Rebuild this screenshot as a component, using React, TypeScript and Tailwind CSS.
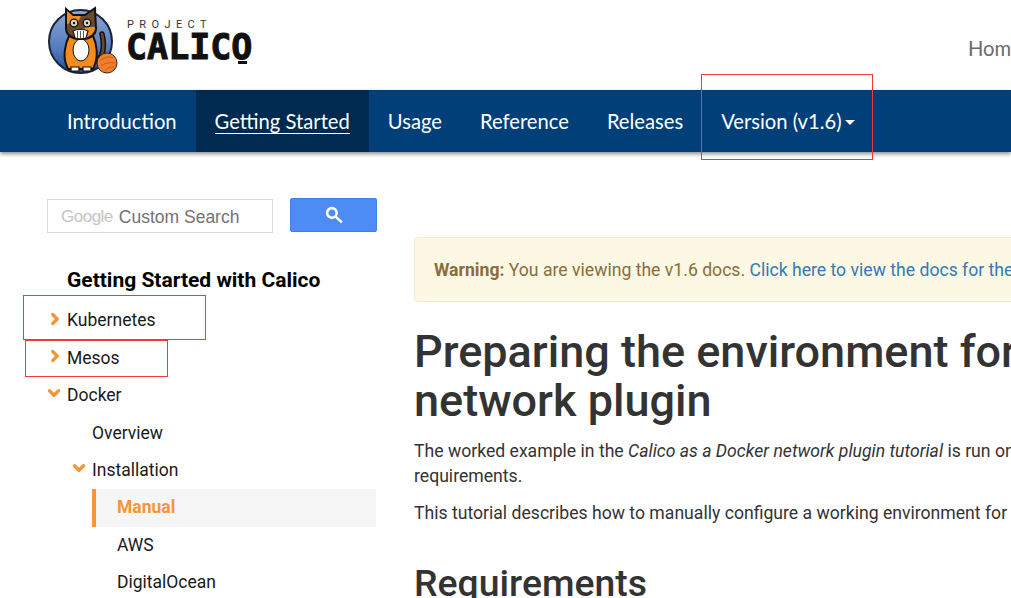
import { ChevronDown, ChevronRight } from "lucide-react";

function CalicoLogo() {
  return (
    <svg width="72" height="72" viewBox="0 0 72 72" className="shrink-0">
      <defs>
        <linearGradient id="disc" x1="0" y1="0" x2="0" y2="1">
          <stop offset="0" stopColor="#8fa9d6" />
          <stop offset="0.65" stopColor="#4f78bb" />
          <stop offset="1" stopColor="#1c4c9a" />
        </linearGradient>
      </defs>
      <circle cx="33.500" cy="35.500" r="31.500" fill="url(#disc)" stroke="#18243a" strokeWidth="2" />
      {/* tail */}
      <path d="M49 55c7-3 9-14 6-27" fill="none" stroke="#17120e" strokeWidth="5.500" strokeLinecap="round" />
      <path d="M49 55c7-3 9-14 6-27" fill="none" stroke="#6a4a2c" strokeWidth="2.500" strokeLinecap="round" />
      {/* body */}
      <path d="M22 30h24c4 8 5 20 2 28l-2 5H21l-2-5c-3-8-1-20 3-28z" fill="#f58a1f" stroke="#17120e" strokeWidth="2" />
      <ellipse cx="34" cy="44" rx="8" ry="11" fill="#fff" stroke="#17120e" strokeWidth="1" />
      <path d="M24 61h8v4h-8zM36 61h8v4h-8z" fill="#fff" stroke="#17120e" strokeWidth="1.200" />
      {/* head */}
      <path d="M19 3l7 6h12l10-7 1 21c-1 7-6 10-15 10s-14-3-15-10z" fill="#6a4a2c" stroke="#17120e" strokeWidth="2" />
      <path d="M20 5l6 5h8l-3 6-11 2z" fill="#f58a1f" />
      <path d="M38 21l10 0c0 6-5 10-12 11z" fill="#f58a1f" />
      <circle cx="27" cy="17" r="3.800" fill="#dcd8c8" stroke="#17120e" strokeWidth="1.300" />
      <circle cx="40" cy="17" r="3.800" fill="#dcd8c8" stroke="#17120e" strokeWidth="1.300" />
      <circle cx="27" cy="17" r="1.200" fill="#17120e" />
      <circle cx="40" cy="17" r="1.200" fill="#17120e" />
      <path d="M26 25c3-2 12-2 15 0l-2 7c-3 1-8 1-11 0z" fill="#fff" stroke="#17120e" strokeWidth="1.200" />
      <path d="M30.500 25v7M33.500 25v7M36.500 25v7" stroke="#17120e" strokeWidth="0.700" />
      {/* yarn */}
      <circle cx="60" cy="57" r="10" fill="#ef7f2d" stroke="#3a2416" strokeWidth="1" />
      <path d="M53 55c4-4 9-5 13-3M54 60c4-3 9-4 14-3M58 65c2-3 5-4 9-4" fill="none" stroke="#c95f17" strokeWidth="1" />
    </svg>
  );
}

function NavItem({ label, active }: { label: string; active?: boolean }) {
  return (
    <div className={`h-full px-[19px] flex items-center ${active ? "bg-[#002a50]" : ""}`}>
      <span className={`text-[20.200px] text-white ${active ? "border-b border-white leading-[24px]" : ""}`}>
        {label}
      </span>
    </div>
  );
}

function TreeRow({ label, open, plain, indent }: { label: string; open?: boolean; plain?: boolean; indent: string }) {
  return (
    <div className={`h-[37.500px] flex items-center relative ${indent}`}>
      {!plain && open && (
        <ChevronDown size={18} strokeWidth={4.500} className="absolute -ml-[22px] -mt-[4px] text-[#f7953a]" />
      )}
      {!plain && !open && (
        <ChevronRight size={18} strokeWidth={4.500} className="absolute -ml-[21px] -mt-[3px] text-[#f7953a]" />
      )}
      <span>{label}</span>
    </div>
  );
}

export default function App() {
  return (
    <div className="w-[1011px] h-[598px] overflow-hidden bg-white relative font-['Roboto',sans-serif] text-[#1a1a1a]">
      <header className="h-[90px] flex justify-between pl-[47px]">
        <div className="flex items-start pt-[6px] gap-[7px]">
          <CalicoLogo />
          <div className="flex flex-col pt-[12px] relative">
            <span className="text-[11px] leading-[14px] tracking-[5.400px] font-['Roboto',sans-serif] text-[#333] pl-[1px]">
              PROJECT
            </span>
            <span className="text-[35px] leading-[30px] font-bold font-['DejaVu_Sans_Mono',monospace] text-[#111] [-webkit-text-stroke:1px_#111]">
              CALICO
            </span>
            <span className="absolute right-[5px] bottom-[-2px] w-[9px] h-[3px] bg-[#111]" />
          </div>
        </div>
        <div className="pt-[36px] w-[43px] overflow-hidden whitespace-nowrap text-[20.200px] leading-[24px] text-[#6b6b6b] font-['Lato',sans-serif]">
          Home
        </div>
      </header>

      <nav className="h-[62px] bg-[#003f78] pl-[48px] flex items-center shadow-[0_2px_4px_rgba(0,0,0,0.45)] font-['Lato',sans-serif]">
        <NavItem label="Introduction" />
        <NavItem label="Getting Started" active />
        <NavItem label="Usage" />
        <NavItem label="Reference" />
        <NavItem label="Releases" />
        <div className="h-full px-[19px] flex items-center gap-[3px]">
          <span className="text-[20.200px] text-white">Version (v1.6)</span>
          <span className="mt-[2px] border-x-[5px] border-x-transparent border-t-[5px] border-t-white" />
        </div>
      </nav>

      <div className="flex pl-[47px] pt-[46px]">
        <aside className="w-[330px] shrink-0">
          <div className="flex justify-between items-start h-[35px]">
            <div className="mt-[1px] w-[226px] h-[34px] border border-[#d9d9d9] flex items-center pl-[13px] gap-[6px] pt-[2px]">
              <span className="text-[17px] text-[#c4c4c4] font-['Liberation_Sans',sans-serif] tracking-[-0.5px]">Google</span>
              <span className="text-[17.500px] text-[#737373] font-['Liberation_Sans',sans-serif]">Custom Search</span>
            </div>
            <button className="w-[87px] h-[34px] bg-[#4d8cf5] border border-[#3f7fe8] rounded-[2px] flex items-center justify-center">
              <svg width="18" height="18" viewBox="0 0 17 17" fill="none" stroke="white" strokeWidth="2.400">
                <circle cx="6.500" cy="6.500" r="4.500" />
                <path d="M10 10l6 5.500" />
              </svg>
            </button>
          </div>

          <div className="pl-[20px] text-[17.500px] pt-[32px]">
            <div className="text-[21px] leading-[30px] font-bold text-black mb-[6.500px]">Getting Started with Calico</div>
            <TreeRow label="Kubernetes" indent="" />
            <TreeRow label="Mesos" indent="" />
            <TreeRow label="Docker" open indent="" />
            <TreeRow label="Overview" plain indent="pl-[25px]" />
            <TreeRow label="Installation" open indent="pl-[25px]" />
            <div className="h-[38px] -mt-[0.500px] ml-[25px] mr-[1px] pl-[21px] flex items-center bg-[#f6f6f6] border-l-4 border-[#f7953a] font-bold text-[#f7953a]">
              Manual
            </div>
            <div className="h-[37px] pl-[50px] flex items-center">AWS</div>
            <div className="h-[38px] pl-[50px] flex items-center">DigitalOcean</div>
          </div>
        </aside>

        <main className="pl-[37px] w-[900px] shrink-0 whitespace-nowrap text-[#333] text-[17.630px]">
          <div className="mt-[39px] h-[65px] w-[800px] bg-[#fcf8e3] border border-[#faebcc] rounded-[4px] pl-[19px] pt-[1px] flex items-center text-[#8a6d3b]">
            <b className="font-bold">Warning:</b>&nbsp;You are viewing the v1.6 docs.&nbsp;
            <span className="text-[#337ab7]">Click here to view the docs for the latest stable release.</span>
          </div>
          <h1 className="mt-[25px] text-[45px] leading-[49px] font-medium">
            Preparing the environment for a Calico Docker
            <br />
            network plugin
          </h1>
          <p className="mt-[14px] leading-[25px]">
            The worked example in the <i>Calico as a Docker network plugin tutorial</i> is run on a specific environment
            <br />
            requirements.
          </p>
          <p className="mt-[12px] leading-[25px]">
            This tutorial describes how to manually configure a working environment for the tutorial.
          </p>
          <h2 className="mt-[37px] text-[37.400px] leading-[40px] font-medium">Requirements</h2>
        </main>
      </div>

      <div className="absolute left-[701px] top-[74px] w-[172px] h-[86px] border border-[#ee3a3a]" />
      <div className="absolute left-[23px] top-[295px] w-[183px] h-[45px] border border-[#ee3a3a]" />
      <div className="absolute left-[25px] top-[340px] w-[143px] h-[37px] border border-[#ee3a3a]" />
    </div>
  );
}
